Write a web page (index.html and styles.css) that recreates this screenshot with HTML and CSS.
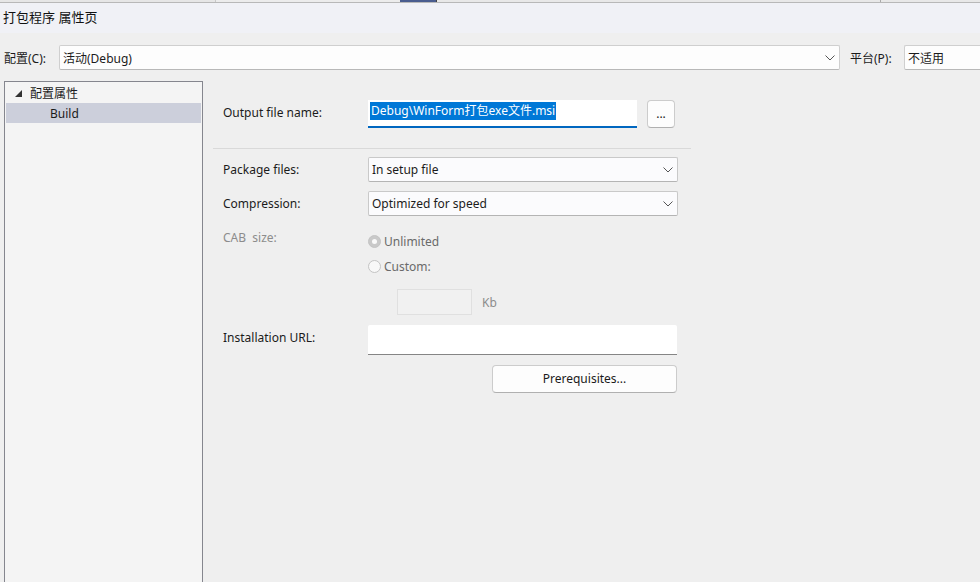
FILE: index.html
```html
<!DOCTYPE html>
<html>
<head>
<meta charset="utf-8">
<link rel="stylesheet" href="styles.css">
</head>
<body>
<div class="topstrip">
  <div class="ts ts1"></div>
  <div class="ts ts2"></div>
  <div class="ts ts3"></div>
  <div class="ts ts4"></div>
  <div class="ts ts5"></div>
</div>
<div class="titlebar">打包程序 属性页</div>
<div class="configrow">
  <span class="cfglabel">配置(C):</span>
  <div class="combo combo-cfg"><span>活动(Debug)</span><svg class="chev" width="10" height="6" viewBox="0 0 10 6"><path d="M0.5 0.5 L5 5 L9.5 0.5" fill="none" stroke="#555" stroke-width="1"/></svg></div>
  <span class="cfglabel plat">平台(P):</span>
  <div class="combo combo-plat"><span>不适用</span></div>
</div>
<div class="main">
  <div class="tree">
    <div class="node"><svg class="tri" width="7" height="7" viewBox="0 0 7 7"><path d="M7 0 L7 7 L0 7 Z" fill="#333"/></svg><span>配置属性</span></div>
    <div class="node sel"><span>Build</span></div>
  </div>
  <div class="content">
    <div class="row row-out">
      <span class="lbl">Output file name:</span>
      <div class="textin active"><span class="selected">Debug\WinForm打包exe文件.msi</span></div>
      <div class="btn btn-dots">...</div>
    </div>
    <div class="sep"></div>
    <div class="row row-sel">
      <span class="lbl">Package files:</span>
      <div class="select"><span>In setup file</span><svg class="chev" width="10" height="6" viewBox="0 0 10 6"><path d="M0.5 0.5 L5 5 L9.5 0.5" fill="none" stroke="#555" stroke-width="1"/></svg></div>
    </div>
    <div class="row row-sel">
      <span class="lbl">Compression:</span>
      <div class="select"><span>Optimized for speed</span><svg class="chev" width="10" height="6" viewBox="0 0 10 6"><path d="M0.5 0.5 L5 5 L9.5 0.5" fill="none" stroke="#555" stroke-width="1"/></svg></div>
    </div>
    <div class="cab">
      <span class="lbl dis">CAB&nbsp; size:</span>
      <div class="radios">
        <div class="radio"><span class="rb checked"></span><span>Unlimited</span></div>
        <div class="radio"><span class="rb"></span><span>Custom:</span></div>
        <div class="kbrow"><div class="kbin"></div><span class="kb">Kb</span></div>
      </div>
    </div>
    <div class="row row-url">
      <span class="lbl">Installation URL:</span>
      <div class="urlin"></div>
    </div>
    <div class="prereq-row">
      <div class="btn btn-prereq">Prerequisites...</div>
    </div>
  </div>
</div>
</body>
</html>
```
FILE: styles.css
```css
html, body {
  margin: 0;
  padding: 0;
}
body {
  width: 980px;
  height: 582px;
  overflow: hidden;
  background: #efefef;
  font-family: "Noto Sans", "Noto Sans CJK SC", sans-serif;
  font-size: 12px;
  color: #1b1b1b;
}
.topstrip {
  display: flex;
  height: 2px;
  border-bottom: 1px solid #b8b8b8;
  background: #e4e4e4;
}
.ts { height: 2px; }
.ts1 { width: 215px; border-right: 1px solid #c8c8c8; background: #e6e6e6; }
.ts2 { width: 184px; background: #ececec; }
.ts3 { width: 36px; background: #4a5d8f; border-right: 1px solid #444; }
.ts4 { width: 443px; background: #e8e8e8; border-right: 1px solid #aaa; }
.ts5 { flex: 1; background: #e8e8e8; }
.titlebar {
  height: 30px;
  background: #f0f1f6;
  padding-left: 3px;
  line-height: 29px;
  font-size: 13px;
  color: #111;
}
.configrow {
  display: flex;
  align-items: center;
  height: 27px;
  margin-top: 11px;
}
.cfglabel {
  padding-left: 4px;
  width: 55px;
  flex: none;
  font-size: 12px;
}
.plat {
  width: 54px;
  padding-left: 10px;
}
.combo {
  height: 23px;
  border: 1px solid #cfcfcf;
  border-bottom-color: #b8b8b8;
  border-radius: 2px;
  background: #fdfdfd;
  display: flex;
  align-items: center;
  padding-left: 3px;
  box-sizing: content-box;
  flex: none;
}
.combo-cfg {
  width: 772px;
  justify-content: space-between;
  padding-right: 4px;
}
.combo-plat {
  width: 80px;
  border-right: none;
}
.chev { margin-right: 0; flex: none; }
.main {
  display: flex;
  margin-top: 10px;
}
.tree {
  margin-left: 4px;
  width: 197px;
  height: 520px;
  border: 1px solid #85868e;
  border-bottom: none;
  background: #f4f4f4;
  padding-top: 1px;
}
.node {
  height: 20px;
  display: flex;
  align-items: center;
  padding-left: 9px;
  margin: 0 1px;
}
.tri { margin-right: 8px; margin-top: 1px; }
.node.sel {
  background: #cccfdb;
  padding-left: 44px;
}
.content {
  padding-left: 11px;
  width: 480px;
}
.row {
  display: flex;
  align-items: center;
}
.lbl {
  width: 135px;
  padding-left: 9px;
  flex: none;
}
.row-out {
  margin-top: 19px;
  height: 28px;
}
.row-out .lbl { margin-top: -3px; }
.textin {
  width: 267px;
  height: 26px;
  background: #fff;
  border-bottom: 2px solid #0067c0;
  margin-left: 10px;
  display: flex;
  align-items: flex-start;
  padding-left: 2px;
  box-sizing: content-box;
}
.selected {
  background: #0078d7;
  color: #fff;
  line-height: 18px;
  margin-top: 2px;
  padding: 0 1px;
}
.btn {
  background: #fdfdfd;
  border: 1px solid #cccccc;
  border-bottom-color: #b0b0b0;
  border-radius: 4px;
  display: flex;
  align-items: center;
  justify-content: center;
  box-sizing: border-box;
}
.btn-dots {
  width: 28px;
  height: 28px;
  margin-left: 10px;
  padding-bottom: 2px;
}
.sep {
  height: 1px;
  background: #d9d9d9;
  margin-top: 20px;
  width: 478px;
  margin-left: -1px;
}
.row-sel {
  height: 25px;
}
.sep + .row-sel { margin-top: 8px; }
.row-sel + .row-sel { margin-top: 9px; }
.select {
  width: 301px;
  height: 23px;
  margin-left: 10px;
  border: 1px solid #c9c9c9;
  border-bottom-color: #b4b4b4;
  border-radius: 2px;
  background: #fbfbfd;
  display: flex;
  align-items: center;
  justify-content: space-between;
  padding: 0 4px 0 3px;
  box-sizing: content-box;
}
.cab {
  display: flex;
  margin-top: 14px;
}
.cab .lbl { line-height: 16px; }
.dis { color: #8c8c8c; }
.radios {
  margin-left: 10px;
  color: #6a6a6a;
}
.radio {
  display: flex;
  align-items: center;
  height: 16px;
  margin-top: 3px;
}
.radio + .radio { margin-top: 9px; }
.rb {
  width: 11px;
  height: 11px;
  border: 1px solid #c4c4c4;
  border-radius: 50%;
  background: #f8f8f8;
  margin-right: 3px;
  box-sizing: content-box;
  position: relative;
}
.rb.checked {
  background: #c9c9c9;
  border-color: #c4c4c4;
}
.rb.checked::after {
  content: "";
  position: absolute;
  left: 3px;
  top: 3px;
  width: 5px;
  height: 5px;
  border-radius: 50%;
  background: #fafafa;
}
.kbrow {
  display: flex;
  align-items: center;
  margin-top: 15px;
  margin-left: 29px;
}
.kbin {
  width: 73px;
  height: 24px;
  border: 1px solid #e0e0e0;
  background: #f1f1f1;
}
.kb {
  margin-left: 10px;
  color: #8c8c8c;
}
.row-url {
  margin-top: 10px;
  height: 30px;
  align-items: flex-start;
}
.row-url .lbl { line-height: 26px; }
.urlin {
  width: 309px;
  height: 29px;
  margin-left: 10px;
  background: #fff;
  border-bottom: 1px solid #858585;
  border-radius: 2px 2px 0 0;
}
.prereq-row {
  display: flex;
  margin-top: 10px;
  padding-left: 278px;
}
.btn-prereq {
  width: 185px;
  height: 28px;
  padding-bottom: 1px;
}
```
